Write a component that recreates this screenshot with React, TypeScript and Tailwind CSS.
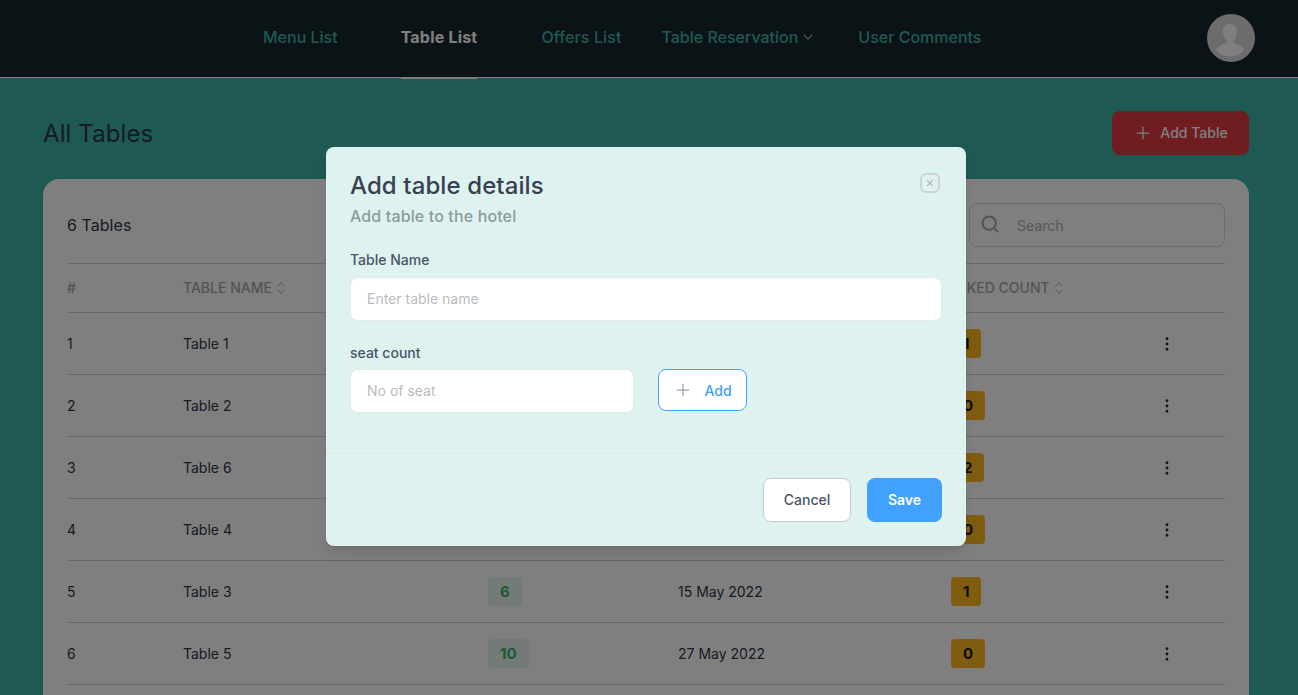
import { ChevronDown, ChevronsUpDown, MoreVertical, Plus, Search, X } from "lucide-react";

const tables = [
  { id: 1, name: "Table 1", seats: 4, date: "12 May 2022", booked: 1 },
  { id: 2, name: "Table 2", seats: 6, date: "12 May 2022", booked: 0 },
  { id: 3, name: "Table 6", seats: 8, date: "14 May 2022", booked: 2 },
  { id: 4, name: "Table 4", seats: 4, date: "15 May 2022", booked: 0 },
  { id: 5, name: "Table 3", seats: 6, date: "15 May 2022", booked: 1 },
  { id: 6, name: "Table 5", seats: 10, date: "27 May 2022", booked: 0 },
];

function HeadCell({ label }: { label: string }) {
  return (
    <div className="flex items-center gap-px">
      <span>{label}</span>
      <ChevronsUpDown size={16} strokeWidth={1.5} />
    </div>
  );
}

export default function App() {
  return (
    <div className="relative h-[695px] overflow-hidden bg-[#3cb2a9] font-['Inter',sans-serif] text-[#2d3748]">
      {/* 上部ナビ */}
      <header className="flex h-[78px] items-center border-b border-white bg-[#17262c] pl-[263px]">
        <nav className="flex h-full items-center text-base font-medium text-[#3cb2a9]">
          <a className="mr-[63px] pb-1">Menu List</a>
          <a className="relative mr-[64px] flex h-full items-center pb-1 font-bold tracking-[0.2px] text-white">
            Table List
            <span className="absolute right-0 -bottom-[2px] left-0 h-[2px] bg-white" />
          </a>
          <a className="mr-[40px] pb-1 tracking-[0.1px]">Offers List</a>
          <a className="mr-[42px] flex items-center gap-[2px] pb-1">
            Table Reservation
            <ChevronDown size={16} strokeWidth={1.75} className="text-[#9aa5a5]" />
          </a>
          <a className="pb-1">User Comments</a>
        </nav>
        <div className="mr-[43px] mb-[2px] ml-auto h-12 w-12 overflow-hidden rounded-full bg-[#d8d8d8]">
          <svg viewBox="0 0 48 48" className="h-12 w-12">
            <path d="M23 10c-4 0-7 3-7 7.500 0 3 1 6 3 8 1 1 1 3-.5 4-2 1.500-8.500 2-9 6 1 4 7 7 13.500 7s12.500-3 13.500-7c-.5-4-7-4.500-9-6-1.500-1-1.500-3-.5-4 2-2 3-5 3-8 0-4.500-3-7.500-7-7.500z" fill="#ffffff" />
          </svg>
        </div>
      </header>

      <main className="pr-[49px] pl-[43px]">
        {/* タイトル行 */}
        <div className="mb-px flex h-[100px] items-center justify-between pt-[10px]">
          <h1 className="mt-[2px] text-2xl tracking-[0.1px]">All Tables</h1>
          <button className="flex h-11 w-[137px] items-center justify-center gap-[7px] rounded-lg bg-[#e03a45] text-sm font-medium text-white">
            <Plus size={20} strokeWidth={1.5} />
            Add Table
          </button>
        </div>

        {/* テーブルカード */}
        <section className="rounded-2xl bg-white px-6 pt-6 pb-6">
          <div className="flex h-[60px] items-start justify-between">
            <p className="mt-[10px] text-base tracking-[0.05px]">6 Tables</p>
            <div className="flex h-11 w-[256px] items-center rounded-lg border border-[#d9d9d9] pl-[10px]">
              <Search size={20} strokeWidth={2.5} className="mb-[2px] text-[#a8a8a8]" />
              <span className="mt-[2px] ml-[17px] text-sm text-[#b0b0b0]">Search</span>
            </div>
          </div>

          <div className="grid h-[50px] grid-cols-[116px_305px_190px_258px_1fr] items-center border-y border-[#d4d4d4] text-sm font-medium text-[#a8a8a8]">
            <span>#</span>
            <HeadCell label="TABLE NAME" />
            <HeadCell label="SEAT COUNT" />
            <HeadCell label="CREATED ON" />
            <HeadCell label="BOOKED COUNT" />
          </div>

          {tables.map((t) => (
            <div
              key={t.id}
              className="grid h-[62px] grid-cols-[116px_305px_190px_273px_1fr] items-center border-b border-[#d4d4d4] text-sm"
            >
              <span>{t.id}</span>
              <span>{t.name}</span>
              <span>
                <span className="inline-block h-[29px] rounded bg-[#e9f5ee] px-3 text-[15px] leading-[29px] font-bold text-[#3bb26d]">
                  {t.seats}
                </span>
              </span>
              <span>{t.date}</span>
              <div className="flex items-center justify-between pr-[49px]">
                <span className="h-[29px] rounded bg-[#ffb81e] px-3 text-[15px] leading-[29px] font-bold text-[#1a1a1a]">
                  {t.booked}
                </span>
                <MoreVertical size={18} strokeWidth={1.75} className="text-[#1f2937]" />
              </div>
            </div>
          ))}
        </section>
      </main>

      {/* モーダル */}
      <div className="absolute inset-0 bg-black/50 pt-[147px] pl-[326px]">
        <div className="h-[399px] w-[640px] rounded-lg bg-[#def2f0] shadow-lg">
          <div className="relative h-[307px] border-b border-[#e3e7e8] px-6 pt-6">
            <button className="absolute top-[26px] right-[26px] flex h-5 w-5 items-center justify-center rounded-md border-2 border-[#cfd3d3] text-[#b5b9b9]">
              <X size={10} strokeWidth={3} />
            </button>
            <h2 className="text-2xl leading-[30px] font-medium tracking-[0.1px] text-[#374151]">Add table details</h2>
            <p className="mt-[3px] text-base leading-6 font-medium tracking-[0.13px] text-[#8f9a9b]">Add table to the hotel</p>

            <label className="mt-[22px] block text-sm leading-5 font-medium text-[#4a5568]">Table Name</label>
            <input
              placeholder="Enter table name"
              className="mt-[7px] block h-11 w-[592px] rounded-lg border border-[#e5e7eb] bg-white px-4 pb-[2px] text-sm placeholder:text-[#b9bcbf]"
            />

            <label className="mt-[22px] block text-sm leading-5 font-medium text-[#4a5568]">seat count</label>
            <div className="mt-[6px] flex items-start gap-6">
              <input
                placeholder="No of seat"
                className="block h-11 w-[284px] rounded-lg border border-[#e5e7eb] bg-white px-4 pb-[2px] text-sm placeholder:text-[#b9bcbf]"
              />
              <button className="flex h-[42px] w-[89px] items-center justify-center gap-[11px] rounded-lg border border-[#40a1ff] bg-white text-sm font-medium text-[#40a1ff]">
                <Plus size={20} strokeWidth={1.5} className="text-[#9ca3af]" />
                <span className="mt-[2px]">Add</span>
              </button>
            </div>
          </div>
          <div className="flex justify-end gap-4 px-6 pt-6">
            <button className="h-11 w-[88px] rounded-lg border border-[#c9c9c9] bg-white text-sm font-medium text-[#4a5568]">
              Cancel
            </button>
            <button className="h-11 w-[75px] rounded-lg bg-[#40a1ff] text-sm font-semibold text-white">Save</button>
          </div>
        </div>
      </div>
    </div>
  );
}
